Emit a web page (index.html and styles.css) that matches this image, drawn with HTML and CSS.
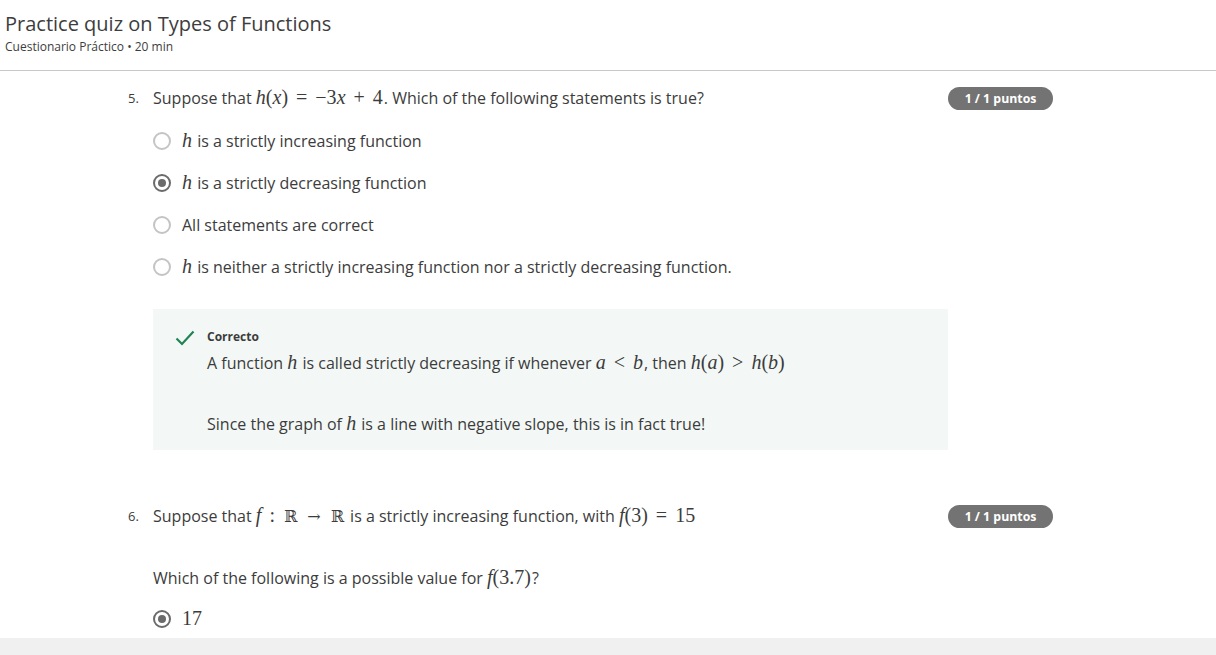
FILE: index.html
```html
<!DOCTYPE html>
<html lang="es">
<head>
<meta charset="utf-8">
<title>Practice quiz on Types of Functions</title>
<link rel="stylesheet" href="styles.css">
</head>
<body>
<header class="page-header">
  <h1 class="title">Practice quiz on Types of Functions</h1>
  <div class="subtitle">Cuestionario Práctico • 20 min</div>
</header>

<main class="quiz">
  <section class="question">
    <div class="qnum">5.</div>
    <div class="qbody">
      <div class="prompt">Suppose that <span class="m"><i>h</i>(<i>x</i>) <span class="op">=</span> −3<i>x</i> <span class="op">+</span> 4</span>. Which of the following statements is true?</div>
      <ul class="options">
        <li class="option"><span class="radio"></span><span class="otext"><span class="m"><i>h</i></span> is a strictly increasing function</span></li>
        <li class="option"><span class="radio checked"></span><span class="otext"><span class="m"><i>h</i></span> is a strictly decreasing function</span></li>
        <li class="option"><span class="radio"></span><span class="otext">All statements are correct</span></li>
        <li class="option"><span class="radio"></span><span class="otext"><span class="m"><i>h</i></span> is neither a strictly increasing function nor a strictly decreasing function.</span></li>
      </ul>
      <div class="feedback">
        <svg class="check" width="20" height="16" viewBox="0 0 20 16"><path d="M1.5 8.5 L7 14 L18.5 1.5" fill="none" stroke="#1f8354" stroke-width="2.2"/></svg>
        <div class="fb-content">
          <div class="fb-label">Correcto</div>
          <p class="fb-line">A function <span class="m"><i>h</i></span> is called strictly decreasing if whenever <span class="m"><i>a</i> <span class="op">&lt;</span> <i>b</i></span>, then <span class="m"><i>h</i>(<i>a</i>) <span class="op">&gt;</span> <i>h</i>(<i>b</i>)</span></p>
          <p class="fb-line second">Since the graph of <span class="m"><i>h</i></span> is a line with negative slope, this is in fact true!</p>
        </div>
      </div>
    </div>
    <div class="badge">1 / 1 puntos</div>
  </section>

  <section class="question q6">
    <div class="qnum">6.</div>
    <div class="qbody">
      <div class="prompt">Suppose that <span class="m"><i>f</i> <span class="op">:</span> <span class="bb">ℝ</span> <span class="op arrow">→</span> <span class="bb">ℝ</span></span> is a strictly increasing function, with <span class="m"><i>f</i>(3) <span class="op">=</span> 15</span></div>
      <div class="prompt sub">Which of the following is a possible value for <span class="m"><i>f</i>(3.7)</span>?</div>
      <ul class="options">
        <li class="option"><span class="radio checked"></span><span class="otext"><span class="m">17</span></span></li>
      </ul>
    </div>
    <div class="badge">1 / 1 puntos</div>
  </section>
</main>

<footer class="bottom-bar"></footer>
</body>
</html>
```

FILE: styles.css
```css
* { box-sizing: border-box; }

html, body {
  margin: 0;
  padding: 0;
  background: #fff;
  overflow: hidden;
}

body {
  font-family: "Open Sans", "Liberation Sans", sans-serif;
  color: #3c3c3c;
  height: 655px;
}

.page-header {
  padding: 11px 5px 0;
  height: 71px;
  border-bottom: 1px solid #c8c8c8;
}

.title {
  margin: 0;
  font-size: 20px;
  font-weight: 400;
  line-height: 26px;
  color: #3d3d3d;
}

.subtitle {
  margin-top: 2px;
  font-size: 12px;
  line-height: 16px;
  color: #3d3d3d;
}

.quiz {
  padding-left: 128px;
  padding-top: 15px;
}

.question {
  display: grid;
  grid-template-columns: 25px 795px 105px;
  align-items: start;
}

.q6 { margin-top: 54px; }

.qnum {
  font-size: 13px;
  line-height: 24px;
}

.prompt {
  font-size: 16px;
  line-height: 24px;
  white-space: nowrap;
}

.prompt.sub { margin-top: 38px; }

.m {
  font-family: "Liberation Serif", "DejaVu Serif", serif;
  font-size: 20px;
  line-height: 0;
  white-space: nowrap;
  padding-right: 1px;
}

.m i { font-style: italic; }

.m .op { padding: 0 3px; }

.m .arrow { font-family: "DejaVu Serif", serif; font-size: 16px; padding: 0 4px; }

.bb { font-family: "DejaVu Serif", serif; font-size: 16px; padding: 0 1px; }

.options {
  list-style: none;
  margin: 10px 0 0;
  padding: 0;
}

.q6 .options { margin-top: 8px; }

.option {
  display: flex;
  align-items: center;
  height: 42px;
  font-size: 16px;
  line-height: 24px;
}

.radio {
  width: 18px;
  height: 18px;
  border: 2px solid #c4c4c4;
  border-radius: 50%;
  flex: none;
  display: flex;
  align-items: center;
  justify-content: center;
  margin-right: 11px;
}

.radio.checked { border-color: #6b6b6b; }

.radio.checked::after {
  content: "";
  width: 8px;
  height: 8px;
  border-radius: 50%;
  background: #6b6b6b;
}

.feedback {
  margin-top: 21px;
  background: #f3f8f6;
  height: 141px;
  display: flex;
  align-items: flex-start;
  padding: 21px 0 0 22px;
}

.check { flex: none; margin-top: 0; margin-right: 12px; }

.fb-label {
  font-size: 12px;
  font-weight: 700;
  line-height: 14px;
  color: #3c3c3c;
}

.fb-line {
  margin: 7px 0 0;
  font-size: 16px;
  line-height: 24px;
}

.fb-line.second { margin-top: 37px; }

.badge {
  margin-top: 1px;
  height: 23px;
  border-radius: 12px;
  background: #737373;
  color: #fff;
  font-size: 12.3px;
  font-weight: 700;
  line-height: 23px;
  text-align: center;
}

.bottom-bar {
  position: fixed;
  left: 0;
  right: 0;
  bottom: 0;
  height: 17px;
  background: #f0f0f0;
}
```
